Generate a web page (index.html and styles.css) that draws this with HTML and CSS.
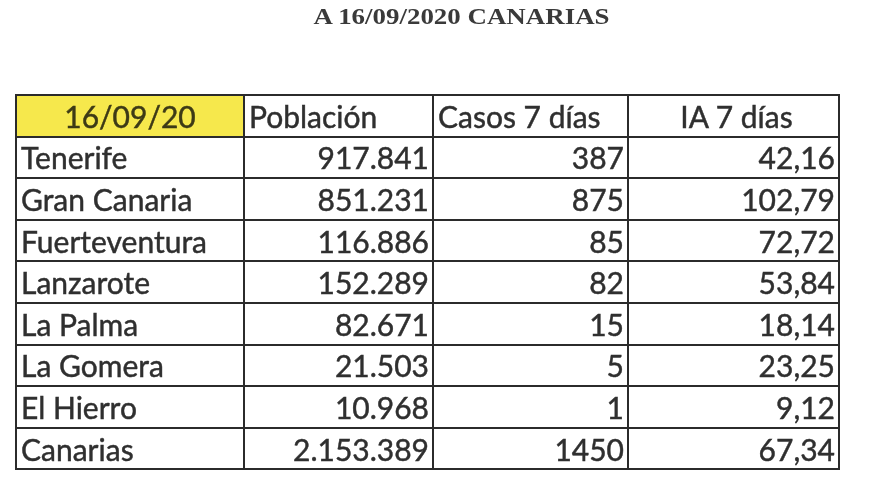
FILE: index.html
```html
<!DOCTYPE html>
<html lang="es">
<head>
<meta charset="utf-8">
<title>A 16/09/2020 CANARIAS</title>
<link rel="stylesheet" href="styles.css">
</head>
<body>
<div class="page">
  <h1 class="title"><span>A 16/09/2020 CANARIAS</span></h1>
  <table class="data">
    <colgroup>
      <col class="c1"><col class="c2"><col class="c3"><col class="c4">
    </colgroup>
    <thead>
      <tr>
        <th class="date">16/09/20</th>
        <th class="left">Población</th>
        <th class="left">Casos 7 días</th>
        <th class="center">IA 7 días</th>
      </tr>
    </thead>
    <tbody>
      <tr><td>Tenerife</td><td class="num">917.841</td><td class="num">387</td><td class="num">42,16</td></tr>
      <tr><td>Gran Canaria</td><td class="num">851.231</td><td class="num">875</td><td class="num">102,79</td></tr>
      <tr><td>Fuerteventura</td><td class="num">116.886</td><td class="num">85</td><td class="num">72,72</td></tr>
      <tr><td>Lanzarote</td><td class="num">152.289</td><td class="num">82</td><td class="num">53,84</td></tr>
      <tr><td>La Palma</td><td class="num">82.671</td><td class="num">15</td><td class="num">18,14</td></tr>
      <tr><td>La Gomera</td><td class="num">21.503</td><td class="num">5</td><td class="num">23,25</td></tr>
      <tr><td>El Hierro</td><td class="num">10.968</td><td class="num">1</td><td class="num">9,12</td></tr>
      <tr><td>Canarias</td><td class="num">2.153.389</td><td class="num">1450</td><td class="num">67,34</td></tr>
    </tbody>
  </table>
</div>
</body>
</html>
```

FILE: styles.css
```css
html, body {
  margin: 0;
  padding: 0;
  background: #ffffff;
}

.page {
  width: 880px;
  height: 495px;
  padding-left: 15px;
  box-sizing: border-box;
  filter: blur(0.45px);
}

.title {
  margin: 0;
  height: 34px;
  padding-left: 43px;
  box-sizing: border-box;
  text-align: center;
  font-family: "Liberation Serif", "Times New Roman", serif;
  font-weight: bold;
  font-size: 23px;
  line-height: 33px;
  color: #3a3a3a;
  width: 850px;
}

.title span {
  display: inline-block;
  transform: scaleX(1.17);
}

.data {
  margin-top: 60px;
  border-collapse: collapse;
  table-layout: fixed;
  width: 825px;
  font-family: Lato, "Open Sans", sans-serif;
  font-size: 30px;
  color: #2f2f2f;
  -webkit-text-stroke: 0.45px #2f2f2f;
}

.c1 { width: 228px; }
.c2 { width: 189px; }
.c3 { width: 195px; }
.c4 { width: 211px; }

.data tr {
  height: 41.6px;
}

.data th,
.data td {
  border: 2px solid #2b2b2b;
  padding: 0 4px 0 4px;
  font-weight: normal;
  line-height: 36px;
  white-space: nowrap;
  text-align: left;
  vertical-align: middle;
}

.data th.date {
  background: #f6e84c;
  color: #3d3a16;
  -webkit-text-stroke: 0.45px #3d3a16;
  text-align: center;
}

.data th.center {
  text-align: center;
  padding-left: 10px;
}

.data td.num {
  text-align: right;
  padding-right: 3px;
}
```
